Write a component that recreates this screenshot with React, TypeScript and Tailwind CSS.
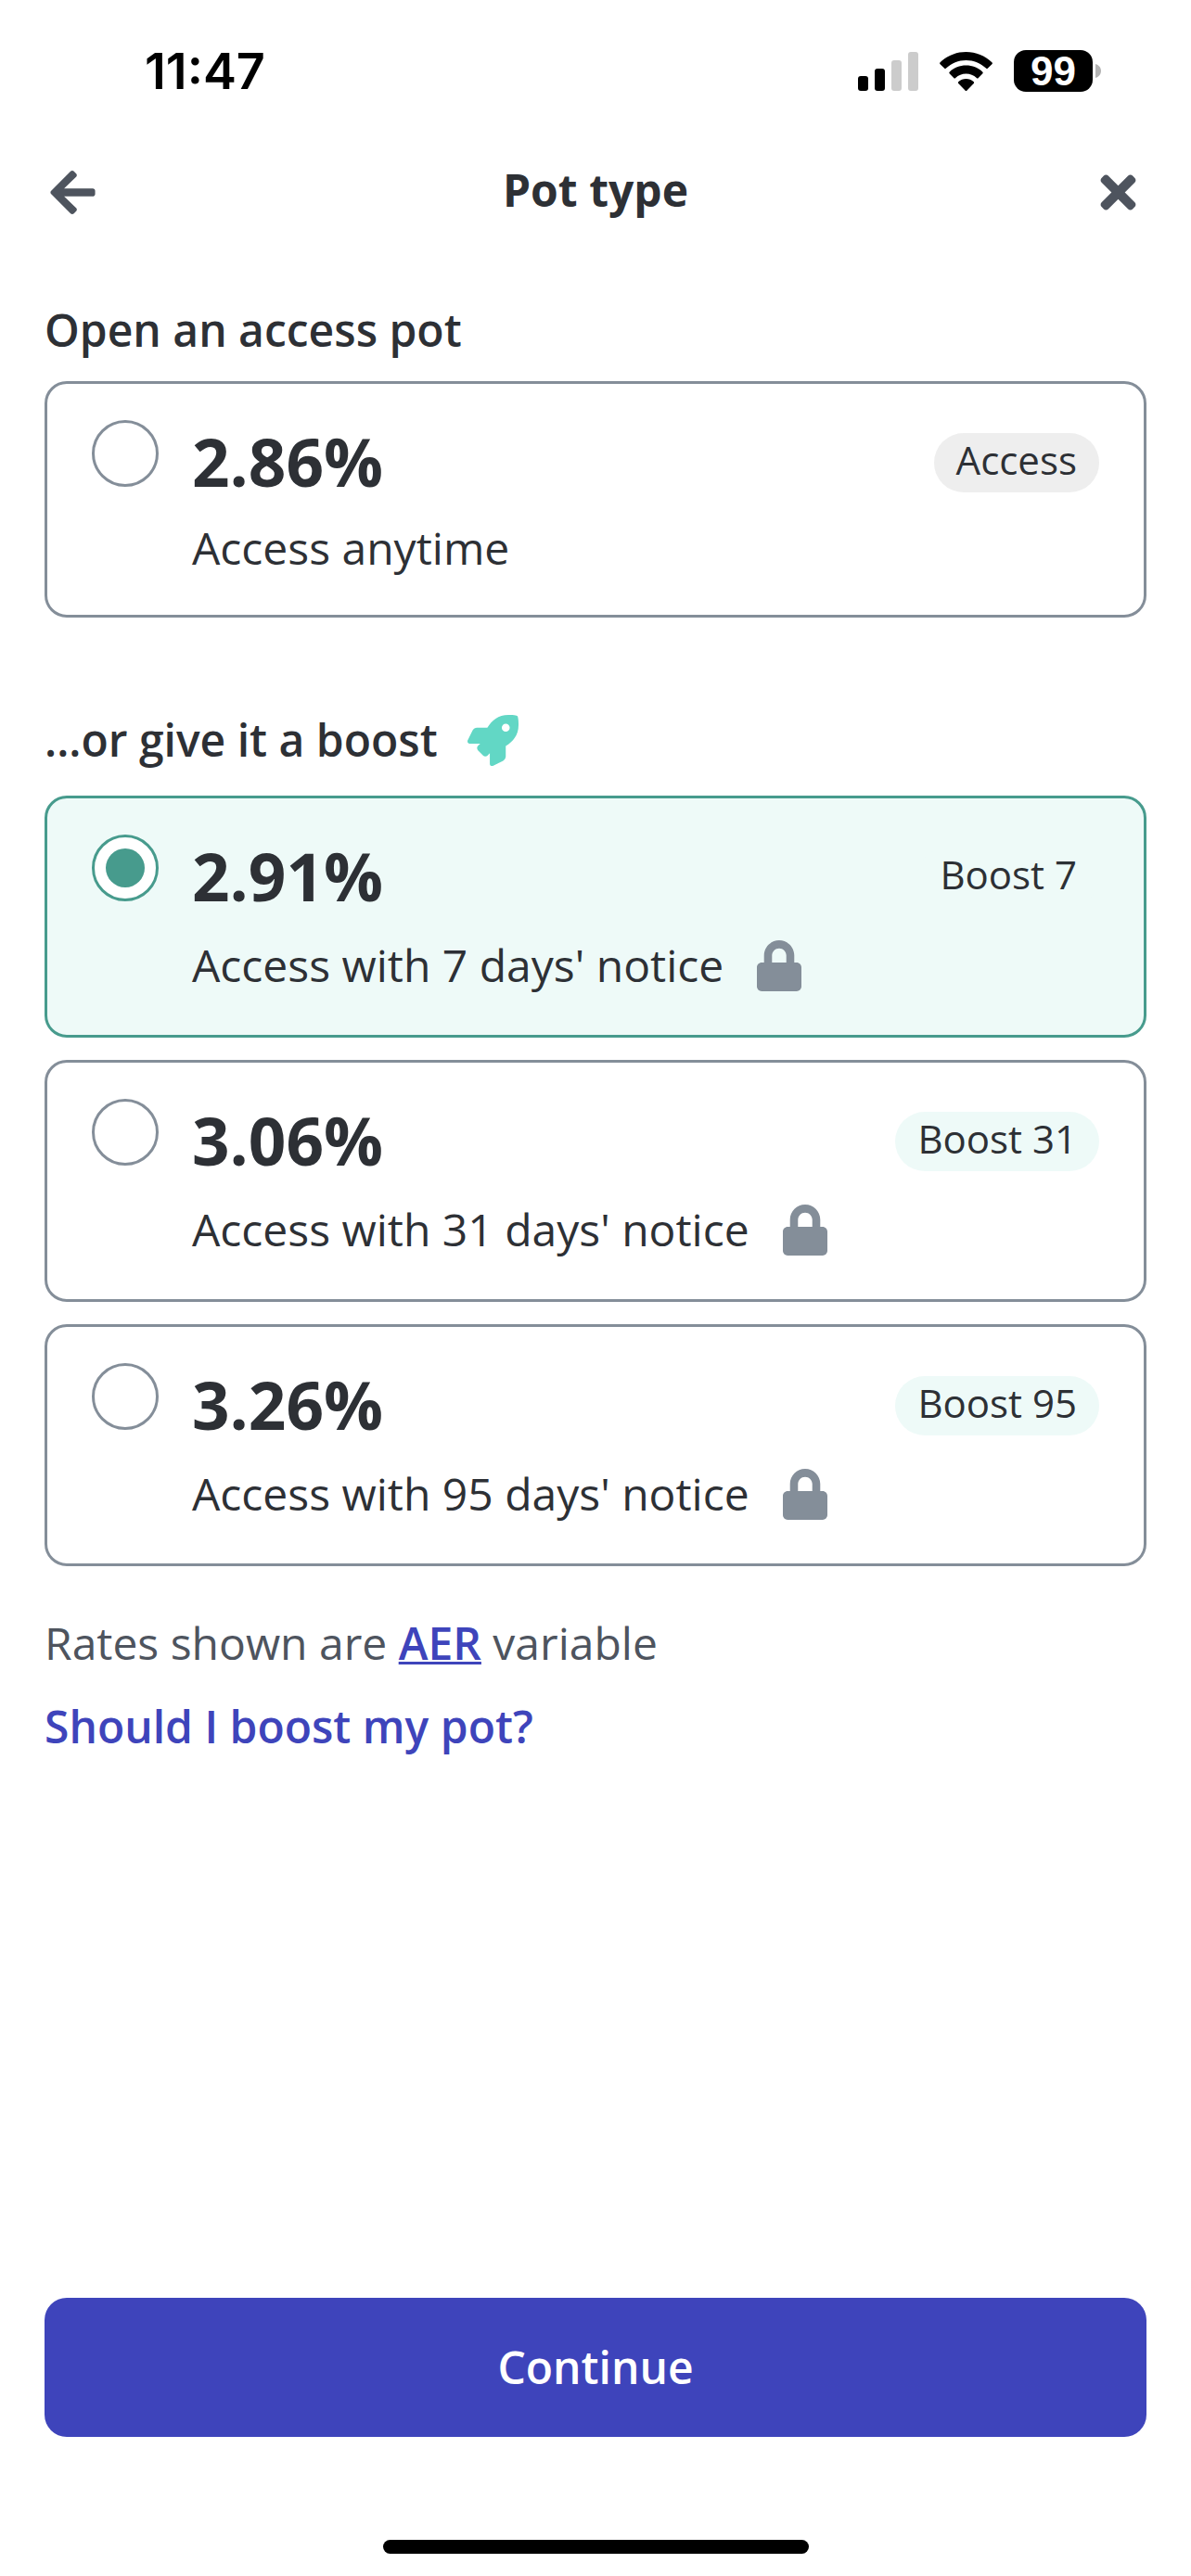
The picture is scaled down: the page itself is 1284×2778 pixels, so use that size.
import React, { useState } from 'react';
import { FaArrowLeft, FaLock, FaRocket, FaTimes } from 'react-icons/fa';

interface Pot {
  id: string;
  rate: string;
  description: string;
  label: string;
  locked: boolean;
}

const accessPot: Pot = { id: 'access', rate: '2.86%', description: 'Access anytime', label: 'Access', locked: false };

const boostPots: Pot[] = [
  { id: 'boost-7', rate: '2.91%', description: "Access with 7 days' notice", label: 'Boost 7', locked: true },
  { id: 'boost-31', rate: '3.06%', description: "Access with 31 days' notice", label: 'Boost 31', locked: true },
  { id: 'boost-95', rate: '3.26%', description: "Access with 95 days' notice", label: 'Boost 95', locked: true },
];

function StatusBar() {
  return (
    <div className="flex h-[141px] items-center justify-between pt-3 pl-[156px] pr-[97px] text-black">
      <span className="font-['Inter',sans-serif] text-[54px] leading-[60px] font-semibold">11:47</span>
      <div className="flex items-center gap-[23px]">
        {/* Signal */}
        <svg width="65" height="42" viewBox="0 0 65 42" aria-hidden="true">
          <rect x="0" y="26" width="11" height="16" rx="3" />
          <rect x="18" y="18" width="11" height="24" rx="3" />
          <rect x="36" y="9" width="11" height="33" rx="3" fill="#cccccc" />
          <rect x="54" y="0" width="11" height="42" rx="3" fill="#cccccc" />
        </svg>
        {/* Wifi */}
        <svg width="57" height="42" viewBox="0 0 57 42" aria-hidden="true">
          <path d="M28.5 0C39.2 0 49 4.2 56.4 11.2a1.4 1.4 0 0 1 0 2L52 17.6a1.4 1.4 0 0 1-2 0C44.2 12.2 36.7 9 28.5 9S12.8 12.2 7 17.6a1.4 1.4 0 0 1-2 0L.6 13.200a1.4 1.4 0 0 1 0-2C8 4.200 17.800 0 28.500 0z" />
          <path d="M28.5 14.5c6.800 0 13 2.600 17.700 6.900a1.400 1.400 0 0 1 0 2.100l-4.400 4.400a1.400 1.400 0 0 1-2 0c-3-2.700-7-4.400-11.300-4.400s-8.300 1.700-11.300 4.400a1.400 1.400 0 0 1-2 0l-4.400-4.400a1.400 1.400 0 0 1 0-2.100c4.700-4.300 10.900-6.900 17.700-6.900z" />
          <path d="M28.5 29c3.100 0 5.900 1.200 8 3.100a1.400 1.400 0 0 1 0 2.100l-7 7.200a1.400 1.400 0 0 1-2 0l-7-7.200a1.400 1.400 0 0 1 0-2.100c2.100-1.900 4.900-3.100 8-3.100z" />
        </svg>
        {/* Battery */}
        <div className="flex items-center gap-[3px]">
          <span className="flex h-[45px] w-[85px] items-center justify-center rounded-[13px] bg-black font-['Liberation_Sans',sans-serif] text-[44px] leading-[45px] font-bold text-white">99</span>
          <svg width="6" height="15" viewBox="0 0 6 15" aria-hidden="true">
            <path d="M0 0c3.500 1 6 4 6 7.500S3.500 14 0 15z" fill="#b3b3b3" />
          </svg>
        </div>
      </div>
    </div>
  );
}

interface PotCardProps {
  pot: Pot;
  selected: boolean;
  onSelect: (id: string) => void;
}

function PotCard({ pot, selected, onSelect }: PotCardProps) {
  return (
    <label
      htmlFor={pot.id}
      className={`flex cursor-pointer items-start gap-9 rounded-3xl border-3 px-12 py-[39px] ${
        selected ? 'border-[#479b8d] bg-[#eefaf8]' : 'border-[#848e99] bg-white'
      }`}
    >
      <input
        type="radio"
        id={pot.id}
        name="pot"
        checked={selected}
        onChange={() => onSelect(pot.id)}
        className="grid size-[72px] shrink-0 appearance-none place-items-center rounded-full border-3 border-[#848e99] bg-white checked:border-[#479b8d] checked:before:size-[42px] checked:before:rounded-full checked:before:bg-[#479b8d] checked:before:content-['']"
      />
      <span className="flex-1">
        <span className="block text-[71px] leading-[90px] font-bold">{pot.rate}</span>
        <span className={`mt-[15px] flex items-center gap-9 text-5xl ${pot.locked ? 'leading-[72px]' : 'leading-[66px]'}`}>
          {pot.description}
          {pot.locked && <FaLock className="h-[55px] w-12 text-[#848e99]" />}
        </span>
      </span>
      <span
        className={`mt-3.5 rounded-full px-6 pb-[7px] text-[42px] leading-[57px] ${
          pot.locked ? 'bg-[#eefaf8]' : 'bg-[#eeeeee]'
        }`}
      >
        {pot.label}
      </span>
    </label>
  );
}

export default function App() {
  const [selected, setSelected] = useState('boost-7');

  return (
    <div className="flex min-h-screen flex-col bg-white font-['Open_Sans',sans-serif] text-[#2d3035]">
      <StatusBar />

      {/* Header */}
      <header className="flex h-[132px] items-center justify-between px-12">
        <button type="button" aria-label="Back" className="flex w-[60px] justify-center text-[#4e545e]">
          <FaArrowLeft size={55} />
        </button>
        <h1 className="pb-1 text-5xl leading-[66px] font-bold">Pot type</h1>
        <button type="button" aria-label="Close" className="flex w-[60px] justify-center text-[#4e545e]">
          <FaTimes size={55} />
        </button>
      </header>

      <main className="flex-1 px-12 pt-[50px]">
        <h2 className="mb-[22px] text-5xl leading-[66px] font-semibold">Open an access pot</h2>
        <PotCard pot={accessPot} selected={selected === accessPot.id} onSelect={setSelected} />

        <h2 className="mt-24 mb-6 flex items-center gap-8 text-5xl leading-[72px] font-semibold">
          ...or give it a boost
          <FaRocket size={55} className="text-[#62d7c5]" />
        </h2>
        <div className="flex flex-col gap-6">
          {boostPots.map(pot => (
            <PotCard key={pot.id} pot={pot} selected={selected === pot.id} onSelect={setSelected} />
          ))}
        </div>

        <p className="mt-[50px] text-5xl leading-[66px] text-[#4e545e]">
          Rates shown are{' '}
          <a href="#aer" className="font-semibold text-[#3e44bb] underline decoration-3">AER</a>
          {' '}variable
        </p>
        <a href="#boost" className="mt-6 inline-block text-5xl leading-[66px] font-semibold text-[#3e44bb]">
          Should I boost my pot?
        </a>
      </main>

      <footer className="px-12 pb-6">
        <button type="button" className="h-[150px] w-full rounded-3xl bg-[#3e44bb] text-5xl font-semibold text-white">
          Continue
        </button>
        <div className="mx-auto mt-[111px] h-[15px] w-[459px] rounded-full bg-black" />
      </footer>
    </div>
  );
}
